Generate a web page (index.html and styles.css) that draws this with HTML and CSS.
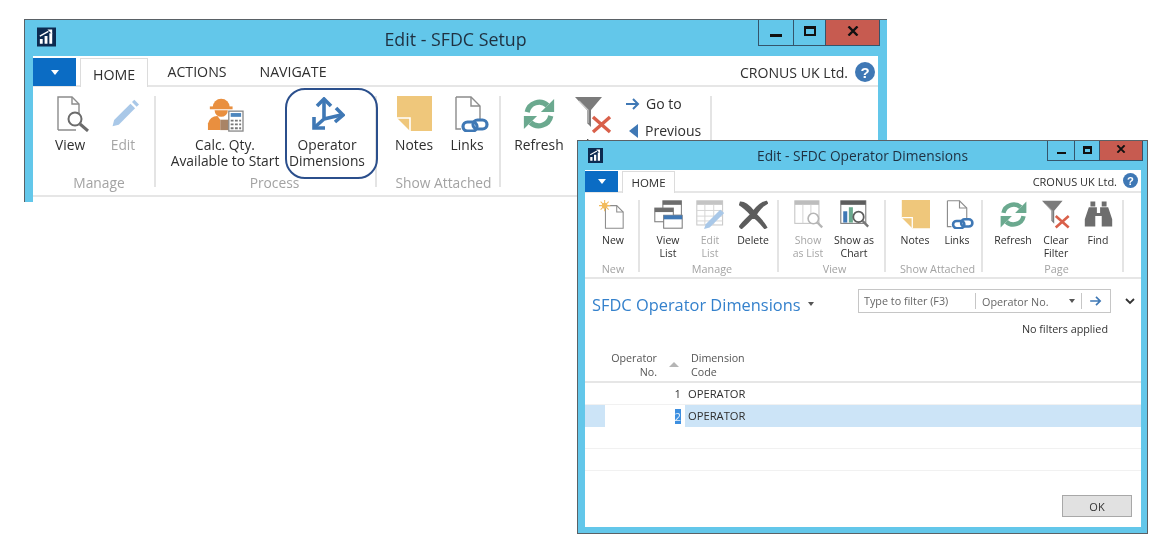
FILE: index.html
```html
<!DOCTYPE html>
<html lang="en">
<head>
<meta charset="utf-8">
<title>SFDC Setup</title>
<link rel="stylesheet" href="styles.css">
</head>
<body>
<svg class="defs" aria-hidden="true">
  <symbol id="logo" viewBox="0 0 20 20"><rect width="20" height="20" fill="#0c2a50"/><path d="M3 17v-5h3v5zM8 17V9h3v8zM13 17V6h3v11z" fill="#fff"/><path d="M3 9l9-5" stroke="#fff" stroke-width="1.4" fill="none"/><path d="M11 2h5v5z" fill="#fff"/></symbol>
  <symbol id="x" viewBox="0 0 12 10"><path d="M1.500 .5l9 9M10.500 .5l-9 9" stroke="#111" stroke-width="2.400" fill="none"/></symbol>
  <symbol id="view" viewBox="0 0 36 36"><path d="M2 34V1h14l7 7v10M2 34h18" fill="#fff" stroke="#8c8c8c" stroke-width="1.4"/><path d="M16 1v7h7" fill="none" stroke="#8c8c8c" stroke-width="1.4"/><circle cx="19" cy="23" r="6.500" fill="#fff" stroke="#6b6b6b" stroke-width="2"/><path d="M24 28l8 7" stroke="#6b6b6b" stroke-width="3"/></symbol>
  <symbol id="pencil" viewBox="0 0 36 36"><path d="M4 27L25 6l6 6-21 21-8 2z" fill="#a9c8e8"/><path d="M27 4l3-3 6 6-3 3z" fill="#a9c8e8"/></symbol>
  <symbol id="worker" viewBox="0 0 40 38"><path d="M7 12a9 9 0 0 1 18 0z" fill="#e98f3f"/><rect x="4" y="11" width="24" height="3" fill="#e98f3f"/><path d="M9 15h14a7 7 0 0 1-14 0z" fill="#e98f3f"/><path d="M2 36V29a10 10 0 0 1 10-8l3 4v11z" fill="#e98f3f"/><path d="M15 25h9v11h-9z" fill="#a98466"/><rect x="24" y="16" width="15" height="21" fill="#fff" stroke="#8a8a8a" stroke-width="1.4"/><rect x="26" y="18" width="11" height="4" fill="#4d86bd"/><path d="M26 25h3v2h-3zm4.500 0h3v2h-3zm4.500 0h2v2h-2zM26 29h3v2h-3zm4.500 0h3v2h-3zm4.500 0h2v2h-2zM26 33h3v2h-3zm4.500 0h3v2h-3zm4.500 0h2v2h-2z" fill="#777"/></symbol>
  <symbol id="dims" viewBox="0 0 34 33"><g fill="none" stroke="#3f78b5" stroke-width="3.600"><path d="M13 3V22L30 18M13 22L4 30"/><path d="M6 9l7-7 7 7M25 11l7 7-8 7M3 20v11h11"/></g></symbol>
  <symbol id="note" viewBox="0 0 36 36"><path d="M1 0h35v35H14L1 22z" fill="#efc77b"/><path d="M1 22h13v13" fill="none" stroke="#fff" stroke-width="1.600"/></symbol>
  <symbol id="links" viewBox="0 0 36 36"><path d="M3 1h15l9 9v14M3 1v32h5" fill="#fff" stroke="#8c8c8c" stroke-width="1.4"/><path d="M18 1v9h9" fill="none" stroke="#8c8c8c" stroke-width="1.4"/><rect x="10" y="26" width="14" height="9" rx="4.500" fill="none" stroke="#3f78b5" stroke-width="3.200"/><rect x="20" y="24" width="14" height="9" rx="4.500" fill="none" stroke="#3f78b5" stroke-width="3.200"/></symbol>
  <symbol id="refresh" viewBox="0 0 36 36"><path d="M5.500 16A13 13 0 0 1 27 9" fill="none" stroke="#6ba98f" stroke-width="5.500"/><path d="M34 2v14H20z" fill="#6ba98f"/><path d="M30.500 20A13 13 0 0 1 9 27" fill="none" stroke="#6ba98f" stroke-width="5.500"/><path d="M2 34V20h14z" fill="#6ba98f"/></symbol>
  <symbol id="clearfilter" viewBox="0 0 38 38"><path d="M0 1h27L16 14v17l-4-4V14z" fill="#7b7b7b"/><path d="M4 5l9 9v13" fill="none" stroke="#c9c9c9" stroke-width="1.200"/><path d="M18 21l17 15M35 21L18 36" stroke="#d9604a" stroke-width="3.400" fill="none"/></symbol>
  <symbol id="arrow" viewBox="0 0 14 12"><path d="M0 6h11M7 1l5 5-5 5" fill="none" stroke="#3f78b5" stroke-width="2"/></symbol>
  <symbol id="help" viewBox="0 0 20 20"><circle cx="10" cy="10" r="10" fill="#3f78b5"/><text x="10" y="15.500" text-anchor="middle" fill="#fff" font-family="Liberation Sans" font-weight="700" font-size="15">?</text></symbol>
  <symbol id="new" viewBox="0 0 36 36"><path d="M8 7h14l8 8v20H8z" fill="#fff" stroke="#8c8c8c" stroke-width="1.300"/><path d="M22 7v8h8" fill="none" stroke="#8c8c8c" stroke-width="1.300"/><circle cx="7" cy="7" r="3.500" fill="#f2bb5b"/><path d="M7 0v14M0 7h14M2 2l10 10M12 2L2 12" stroke="#f2bb5b" stroke-width="1.300"/></symbol>
  <symbol id="viewlist" viewBox="0 0 36 36"><rect x="11" y="1" width="23" height="18" fill="#fff" stroke="#7d7d7d" stroke-width="1.300"/><rect x="11" y="1" width="23" height="5" fill="#6d6d6d"/><rect x="1" y="10" width="23" height="17" fill="#fff" stroke="#7d7d7d" stroke-width="1.300"/><rect x="1" y="10" width="23" height="5" fill="#6d6d6d"/><rect x="12" y="19" width="23" height="16" fill="#fff" stroke="#7d7d7d" stroke-width="1.300"/><rect x="12" y="19" width="23" height="5" fill="#3f78b5"/></symbol>
  <symbol id="editlist" viewBox="0 0 36 36"><rect x="1" y="1" width="32" height="30" fill="#fff" stroke="#c9c9c9" stroke-width="1.300"/><rect x="1" y="1" width="32" height="5" fill="#c4c4c4"/><path d="M1 13h32M1 20h32M1 26h32M11 6v25M22 6v25" stroke="#d6d6d6" stroke-width="1.200"/><path d="M12 30L30 12l5 4-18 18-7 2z" fill="#a9c8e8"/></symbol>
  <symbol id="del" viewBox="0 0 36 36"><path d="M2 3c6 0 12 6 16 11C22 9 28 3 34 2l1 2C29 7 24 13 21 18c4 4 10 10 13 16l-2 1c-5-6-9-11-14-14-5 4-9 9-15 14l-2-2c4-6 10-11 14-15C11 14 6 9 1 6z" fill="#5d5d5d" stroke="#5d5d5d" stroke-width="2.200"/></symbol>
  <symbol id="showlist" viewBox="0 0 36 36"><rect x="1" y="1" width="30" height="28" fill="#fff" stroke="#c4c4c4" stroke-width="1.300"/><rect x="1" y="1" width="30" height="5" fill="#bdbdbd"/><path d="M11 6v23M21 6v23" stroke="#d2d2d2" stroke-width="1.200"/><circle cx="24" cy="23" r="6.500" fill="#fff" stroke="#b5b5b5" stroke-width="2"/><path d="M29 28l6 6" stroke="#b5b5b5" stroke-width="2.800"/></symbol>
  <symbol id="chart" viewBox="0 0 36 36"><rect x="1" y="1" width="31" height="28" fill="#fff" stroke="#777" stroke-width="1.300"/><rect x="1" y="1" width="31" height="5" fill="#5d5d5d"/><rect x="4" y="14" width="5" height="14" fill="#3f78b5"/><rect x="11" y="9" width="5" height="19" fill="#6ba98f"/><circle cx="23" cy="21" r="6.500" fill="#fff" stroke="#5d5d5d" stroke-width="2.200"/><path d="M28 26l7 7" stroke="#777" stroke-width="3"/></symbol>
  <symbol id="find" viewBox="0 0 36 36"><g fill="#6d6d6d"><path d="M8 2h6v6H8zM22 2h6v6h-6z"/><path d="M6 9h10v7h4V9h10l5 15v9H22V20h-8v13H1v-9z"/></g></symbol>
</svg>

<section class="window back">
  <header class="titlebar">
    <svg class="logo"><use href="#logo"/></svg>
    <h1 class="wtitle">Edit - SFDC Setup</h1>
    <div class="ctrls">
      <span class="ctrl min"><i class="g-min"></i></span><span class="ctrl max"><i class="g-max"></i></span><span class="ctrl close"><svg class="g-x"><use href="#x"/></svg></span>
    </div>
  </header>
  <div class="client">
    <nav class="tabs">
      <span class="menu"><i class="tri-w"></i></span>
      <span class="tab active">HOME</span><span class="tab t-act">ACTIONS</span><span class="tab t-nav">NAVIGATE</span>
      <span class="company">CRONUS UK Ltd.</span>
      <svg class="help"><use href="#help"/></svg>
    </nav>
    <div class="ribbon">
      <div class="group g1">
        <div class="items">
          <div class="item w52"><svg class="ic ic-shift"><use href="#view"/></svg><span>View</span></div>
          <div class="item w54 off"><svg class="ic ic-sm"><use href="#pencil"/></svg><span>Edit</span></div>
        </div>
        <div class="glabel">Manage</div>
      </div>
      <div class="group g2">
        <div class="items">
          <div class="item w102"><svg class="ic ic-w"><use href="#worker"/></svg><span>Calc. Qty.<br>Available to Start</span></div>
          <div class="item w100"><svg class="ic ic-d"><use href="#dims"/></svg><span>Operator<br>Dimensions</span></div>
        </div>
        <div class="glabel">Process</div>
      </div>
      <div class="group g3">
        <div class="items">
          <div class="item w52"><svg class="ic"><use href="#note"/></svg><span>Notes</span></div>
          <div class="item w54"><svg class="ic ic-shift"><use href="#links"/></svg><span>Links</span></div>
        </div>
        <div class="glabel">Show Attached</div>
      </div>
      <div class="group g4">
        <div class="items">
          <div class="item w60"><svg class="ic ic-r"><use href="#refresh"/></svg><span>Refresh</span></div>
          <div class="item w50"><svg class="ic ic-f"><use href="#clearfilter"/></svg><span>Clear<br>Filter</span></div>
          <div class="nav-col">
            <div class="nav-row"><svg class="nav-ic"><use href="#arrow"/></svg>Go to</div>
            <div class="nav-row"><i class="tri-l"></i>Previous</div>
          </div>
        </div>
        <div class="glabel">Page</div>
      </div>
    </div>
  </div>
  <div class="callout"></div>
</section>

<section class="window front">
  <header class="titlebar">
    <svg class="logo"><use href="#logo"/></svg>
    <h2 class="wtitle">Edit - SFDC Operator Dimensions</h2>
    <div class="ctrls">
      <span class="ctrl min"><i class="g-min"></i></span><span class="ctrl max"><i class="g-max"></i></span><span class="ctrl close"><svg class="g-x"><use href="#x"/></svg></span>
    </div>
  </header>
  <div class="client">
    <nav class="tabs">
      <span class="menu"><i class="tri-w"></i></span>
      <span class="tab active">HOME</span>
      <span class="company">CRONUS UK Ltd.</span>
      <svg class="help"><use href="#help"/></svg>
    </nav>
    <div class="ribbon">
      <div class="group f1">
        <div class="items"><div class="item wfull"><svg class="ic"><use href="#new"/></svg><span>New</span></div></div>
        <div class="glabel">New</div>
      </div>
      <div class="group f2">
        <div class="items">
          <div class="item w42"><svg class="ic"><use href="#viewlist"/></svg><span>View<br>List</span></div>
          <div class="item w42 off"><svg class="ic"><use href="#editlist"/></svg><span>Edit<br>List</span></div>
          <div class="item w44"><svg class="ic"><use href="#del"/></svg><span>Delete</span></div>
        </div>
        <div class="glabel">Manage</div>
      </div>
      <div class="group f3">
        <div class="items">
          <div class="item w46 off"><svg class="ic"><use href="#showlist"/></svg><span>Show<br>as List</span></div>
          <div class="item w46"><svg class="ic"><use href="#chart"/></svg><span>Show as<br>Chart</span></div>
        </div>
        <div class="glabel">View</div>
      </div>
      <div class="group f4">
        <div class="items">
          <div class="item w42"><svg class="ic"><use href="#note"/></svg><span>Notes</span></div>
          <div class="item w42"><svg class="ic ic-shift"><use href="#links"/></svg><span>Links</span></div>
        </div>
        <div class="glabel">Show Attached</div>
      </div>
      <div class="group f5">
        <div class="items">
          <div class="item w44"><svg class="ic"><use href="#refresh"/></svg><span>Refresh</span></div>
          <div class="item w42"><svg class="ic"><use href="#clearfilter"/></svg><span>Clear<br>Filter</span></div>
          <div class="item w42"><svg class="ic"><use href="#find"/></svg><span>Find</span></div>
        </div>
        <div class="glabel">Page</div>
      </div>
    </div>
    <div class="pagehead">
      <div class="pagetitle">SFDC Operator Dimensions</div>
      <i class="tri-d"></i>
      <div class="filter">
        <span class="f-hint">Type to filter (F3)</span>
        <span class="f-field">Operator No.</span>
        <i class="tri-f"></i>
        <span class="f-go"><svg class="f-arrow"><use href="#arrow"/></svg></span>
      </div>
      <svg class="chev" viewBox="0 0 10 7"><path d="M1 1l4 4 4-4" fill="none" stroke="#333" stroke-width="1.800"/></svg>
    </div>
    <div class="nofilter">No filters applied</div>
    <div class="thead">
      <div class="th-no">Operator<br>No.</div>
      <i class="sort"></i>
      <div class="th-code">Dimension<br>Code</div>
    </div>
    <div class="row">
      <span class="c-ind"></span><span class="c-no">1</span><span class="c-code">OPERATOR</span>
    </div>
    <div class="row sel">
      <span class="c-ind"></span><span class="c-no"><b class="caret">2</b></span><span class="c-code">OPERATOR</span>
    </div>
    <div class="row empty"></div>
    <div class="row empty"></div>
    <div class="foot"><button class="ok" type="button">OK</button></div>
  </div>
</section>
</body>
</html>
```
FILE: styles.css
```css
* { box-sizing: border-box; }
html, body { margin: 0; height: 100%; background: #fff; overflow: hidden; }
body { position: relative; font-family: "Open Sans", "Noto Sans", sans-serif; color: #2f2f2f; }
.defs { display: none; }
i { display: block; font-style: normal; }

.window { position: absolute; background: #63c7ea; border: 1px solid #5a6166; border-bottom: 0; filter: blur(.35px); }
.back { left: 24px; top: 19px; width: 863px; height: 183px; border-right: 0; padding: 0 9px 0 8px; }
.front { left: 577px; top: 140px; width: 571px; height: 394px; border-bottom: 1px solid #5a6166; padding: 0 6px 6px 7px; z-index: 2; }

.titlebar { display: grid; grid-template-columns: 1fr auto 1fr; align-items: start; }
.back .titlebar { height: 36px; margin: 0 -2px 0 -8px; }
.front .titlebar { height: 29px; margin-left: -7px; margin-right: -2px; }
.logo { justify-self: start; }
.back .logo { width: 19px; height: 20px; margin: 7px 0 0 12px; }
.front .logo { width: 15px; height: 15px; margin: 7px 0 0 10px; }
.wtitle { margin: 0; font-weight: 400; white-space: nowrap; color: #1f3040; }
.back .wtitle { font-size: 17.800px; line-height: 38px; margin-left: 6px; }
.front .wtitle { font-size: 13.750px; line-height: 29px; margin-left: 4px; }
.ctrls { justify-self: end; display: flex; border: 1px solid #34546b; border-top: 0; }
.back .ctrls { height: 26px; }
.front .ctrls { height: 20px; }
.ctrl { display: flex; align-items: center; justify-content: center; }
.ctrl + .ctrl { border-left: 1px solid #34546b; }
.back .min { width: 34px; } .back .max { width: 32px; } .back .close { width: 54px; }
.front .min { width: 26px; } .front .max { width: 25px; } .front .close { width: 43px; }
.close { background: #c75b50; }
.g-x { display: block; }
.back .g-x { width: 12px; height: 10px; margin-top: -3px; }
.front .g-x { width: 10px; height: 8px; margin-top: -3px; }
.g-min { background: #111; }
.back .g-min { width: 12px; height: 3px; margin-top: 6px; }
.front .g-min { width: 9px; height: 2px; margin-top: 5px; }
.g-max { border: 2px solid #111; border-top-width: 3px; }
.back .g-max { width: 12px; height: 10px; margin-top: -4px; }
.front .g-max { width: 9px; height: 8px; margin-top: -2px; }

.client { background: #fff; }
.back .client { height: 146px; }
.front .client { height: 357px; }

.tabs { display: flex; align-items: flex-end; border-bottom: 2px solid #e6e6e6; position: relative; white-space: nowrap; }
.back .tabs { height: 31px; font-size: 14.200px; }
.front .tabs { height: 23px; font-size: 11.500px; }
.menu { display: flex; align-items: center; justify-content: center; background: #0b6cc4; align-self: flex-start; }
.back .menu { width: 43px; height: 28px; margin: 2px 4px 0 0; }
.front .menu { width: 33px; height: 21px; margin: 1px 4px 0 0; }
.tri-w { width: 0; height: 0; border: 4px solid transparent; border-top: 5px solid #fff; border-bottom: 0; }
.tab { display: flex; align-items: center; justify-content: center; }
.back .tab { height: 29px; padding-top: 2px; }
.front .tab { height: 22px; }
.tab.active { background: #fff; border: 1px solid #dcdcdc; border-bottom: 0; margin-bottom: -2px; }
.back .tab.active { width: 68px; }
.front .tab.active { width: 53px; }
.t-act { width: 98px; }
.t-nav { width: 94px; }
.company { margin-left: auto; align-self: center; }
.back .company { font-size: 14.100px; margin-top: 3px; }
.front .company { font-size: 11px; margin-top: 1px; }
.help { align-self: center; flex: none; }
.back .help { width: 20px; height: 20px; margin: 2px 3px 0 7px; }
.front .help { width: 15px; height: 15px; margin: 0 3px 0 6px; }

.ribbon { display: flex; border-bottom: 2px solid #e6e6e6; }
.back .ribbon { height: 110px; padding-top: 9px; }
.front .ribbon { height: 86px; padding-top: 7px; }
.group { display: flex; flex-direction: column; border-right: 2px solid #e4e4e4; }
.back .group { height: 91px; }
.front .group { height: 72px; }
.items { display: flex; flex: 1; min-height: 0; }
.back .items { height: 79px; flex: none; }
.front .items { height: 63px; flex: none; }
.item { display: flex; flex-direction: column; align-items: center; text-align: center; white-space: nowrap; flex: none; }
.back .item { font-size: 13.800px; line-height: 16px; }
.front .item { font-size: 10.500px; line-height: 12.500px; }
.item.off { color: #a6a6a6; }
.glabel { text-align: center; color: #a3a3a3; white-space: nowrap; }
.back .glabel { font-size: 13.800px; line-height: 16px; }
.front .glabel { font-size: 10.800px; line-height: 12px; }

.ic { display: block; flex: none; }
.back .ic { width: 36px; height: 36px; margin-bottom: 5px; }
.back .ic-shift { margin-left: 7px; }
.front .ic-shift { margin-left: 5px; }
.back .ic-sm { width: 28px; height: 28px; margin: 3px 0 10px 4px; }
.back .ic-w { width: 38px; }
.back .ic-d { width: 34px; height: 33px; margin: 1px 0 7px 2px; }
.back .ic-r { width: 34px; height: 34px; margin: 1px 0 6px; }
.back .ic-f { width: 38px; height: 38px; margin-bottom: 3px; }
.front .ic { width: 29px; height: 29px; margin-bottom: 5px; }

.g1 { width: 123px; padding-left: 11px; }
.g2 { width: 221px; padding-left: 18px; }
.g3 { width: 124px; padding-left: 11px; }
.g4 { width: 211px; padding-left: 8px; }
.g2 .w100 { margin-left: 1px; }
.f1 { width: 55px; padding-left: 3px; }
.f2 { width: 139px; padding-left: 7px; }
.f3 { width: 107px; padding-left: 6px; }
.f4 { width: 97px; padding-left: 8px; }
.f5 { width: 141px; padding-left: 8px; }
.wfull { width: 100%; }
.w42 { width: 42px; } .w44 { width: 44px; } .w46 { width: 46px; } .w50 { width: 50px; }
.w52 { width: 52px; } .w54 { width: 54px; } .w60 { width: 60px; } .w100 { width: 100px; } .w102 { width: 102px; }

.nav-col { margin-left: 7px; display: flex; flex-direction: column; gap: 11px; font-size: 14px; line-height: 16px; }
.nav-row { display: flex; align-items: center; white-space: nowrap; gap: 6px; }
.nav-ic { width: 14px; height: 12px; }
.tri-l { width: 0; height: 0; margin-left: 3px; margin-right: 1px; border: 7px solid transparent; border-right: 9px solid #3f78b5; border-left: 0; }

.callout { position: absolute; left: 260px; top: 68px; width: 93px; height: 91px; border: 2.500px solid #2b4f8c; border-radius: 20px; }

.pagehead { display: flex; align-items: center; height: 24px; margin-top: 10px; padding-left: 7px; }
.pagetitle { color: #3481cc; font-size: 16.400px; white-space: nowrap; width: 216px; flex: none; margin-top: 6px; }
.tri-d { width: 0; height: 0; border: 3px solid transparent; border-top: 4px solid #555; border-bottom: 0; margin-top: 6px; }
.filter { display: flex; align-items: center; margin-left: 44px; width: 253px; height: 24px; border: 1.500px solid #c6c6c6; font-size: 10.800px; color: #666; white-space: nowrap; }
.f-hint { width: 117px; padding-left: 5px; border-right: 1.500px solid #c6c6c6; line-height: 16px; flex: none; }
.f-field { width: 93px; padding-left: 6px; flex: none; }
.tri-f { width: 0; height: 0; flex: none; border: 3.500px solid transparent; border-top: 4px solid #555; border-bottom: 0; }
.f-go { display: flex; justify-content: center; flex: 1; margin-left: 6px; border-left: 1.500px solid #c6c6c6; height: 16px; align-items: center; }
.f-arrow { width: 12px; height: 10px; }
.chev { width: 10px; height: 7px; margin-left: 14px; flex: none; }
.nofilter { text-align: right; padding-right: 33px; font-size: 10.800px; line-height: 16px; margin-top: 8px; color: #333; }

.thead { display: flex; align-items: flex-start; height: 32px; margin-top: 14px; border-bottom: 2px solid #e6e6e6; font-size: 10.700px; line-height: 14px; color: #555; }
.th-no { width: 72px; text-align: right; flex: none; }
.sort { width: 0; height: 0; margin: 11px 0 0 12px; flex: none; border: 5px solid transparent; border-bottom: 5px solid #b5b5b5; border-top: 0; }
.th-code { margin-left: 12px; }

.row { display: flex; align-items: center; height: 22px; font-size: 11.200px; border-bottom: 1.500px solid #f1f1f1; }
.c-ind { width: 20px; align-self: stretch; flex: none; }
.c-no { width: 80px; padding-right: 4px; text-align: right; flex: none; }
.c-code { flex: 1; padding-left: 3px; align-self: stretch; line-height: 21px; }
.sel { border-bottom: 0; }
.sel .c-ind, .sel .c-code { background: #cce4f7; }
.caret { font-weight: 400; background: #3d8fe0; color: #e8f2fb; }

.foot { display: flex; justify-content: flex-end; padding: 24px 9px 0 0; }
.ok { width: 70px; height: 22px; padding: 0; border: 1.500px solid #a8a8a8; background: #e1e1e1; font: 11px "Open Sans", sans-serif; color: #333; }
```
